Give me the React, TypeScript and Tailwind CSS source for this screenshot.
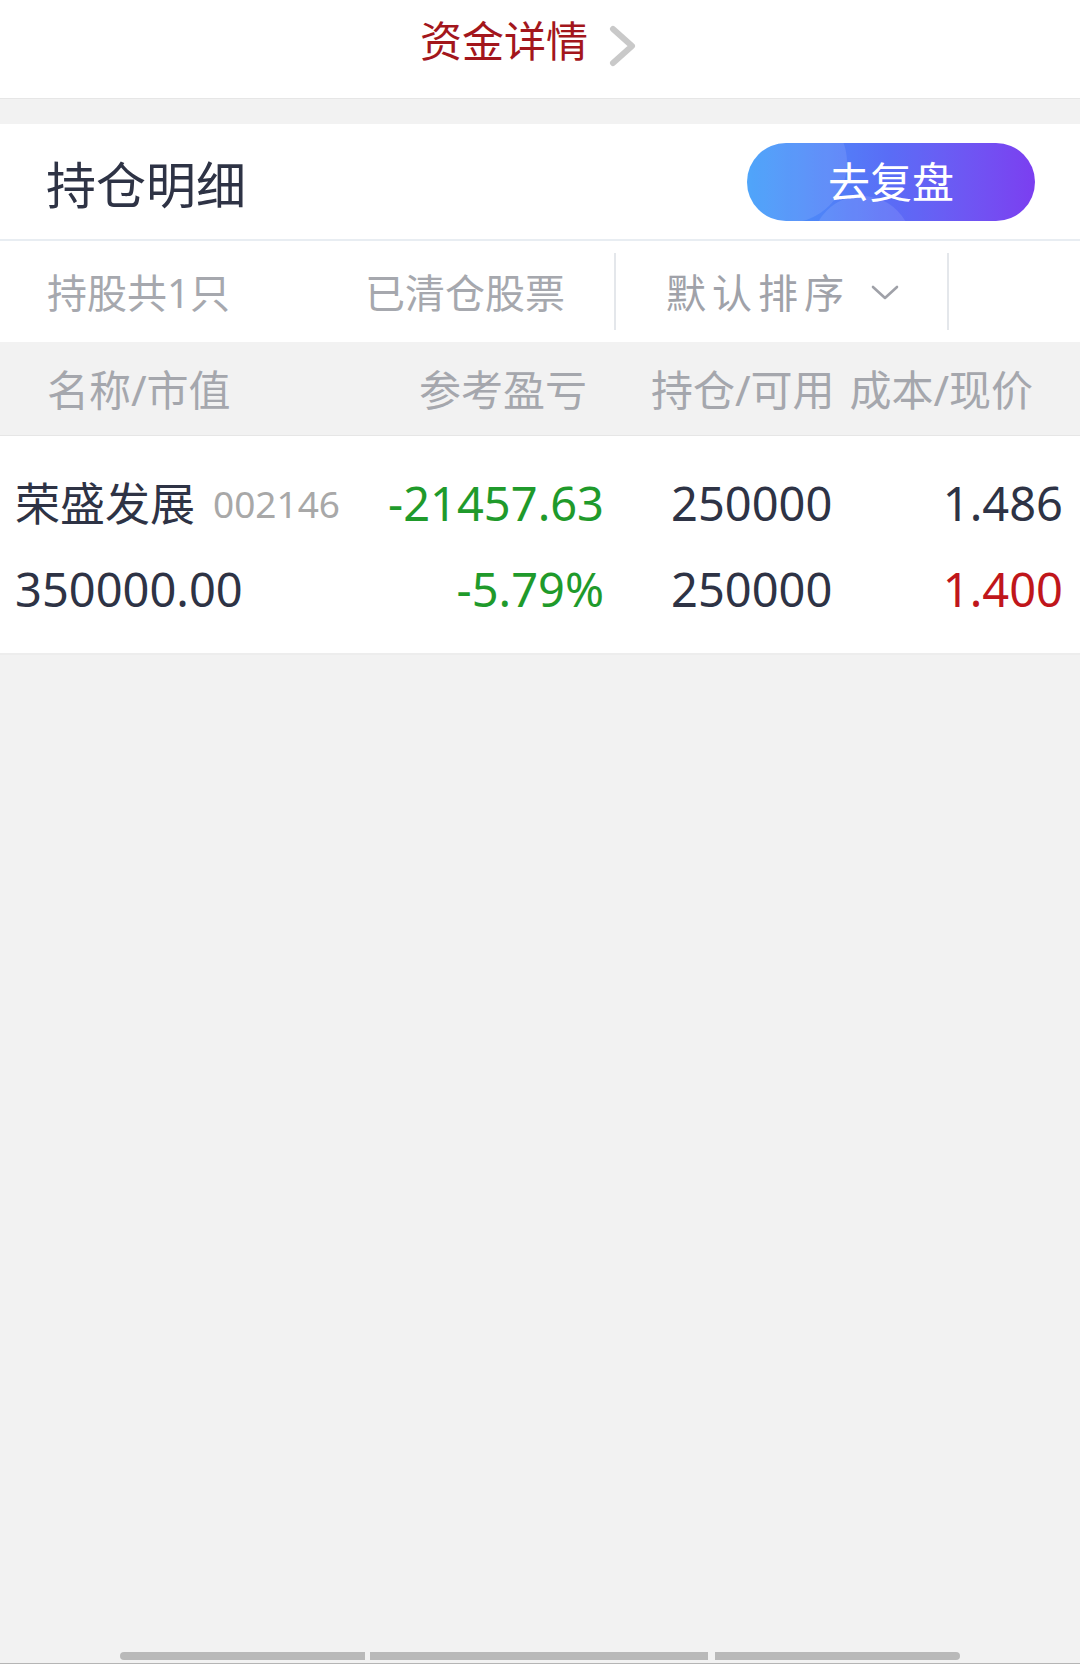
import React from 'react';

const font = "font-['Noto_Sans','Noto_Sans_CJK_SC',sans-serif]";

const ChevronRight = () => (
  <svg width="30" height="44" viewBox="0 0 30 44" className="ml-[20px] mt-[12px]">
    <path d="M5 4 L24 21 L5 38" fill="none" stroke="#c9c9c9" strokeWidth={6} strokeLinecap="round" strokeLinejoin="round" />
  </svg>
);

const ChevronDown = () => (
  <svg width="30" height="18" viewBox="0 0 30 18" className="ml-[20px]">
    <path d="M3 3 L15 14 L27 3" fill="none" stroke="#9fa1a8" strokeWidth={2.6} strokeLinecap="round" strokeLinejoin="round" />
  </svg>
);

export default function App() {
  return (
    <div className={`${font} w-[1080px] h-[1664px] bg-[#f2f2f2] flex flex-col overflow-hidden`}>
      {/* Top link bar */}
      <div className="h-[99px] bg-white flex justify-center items-start pt-[13px] pr-[22px] border-b border-[#e6e6e6]">
        <span className="text-[42px] leading-[56px] text-[#a3161c]">资金详情</span>
        <ChevronRight />
      </div>

      <div className="h-[25px]" />

      {/* Title bar */}
      <div className="h-[117px] bg-white flex items-center justify-between pl-[46px] pr-[45px] border-b-2 border-[#e8edf2]">
        <span className="text-[50px] leading-none text-[#2e3345] pt-[6px]">持仓明细</span>
        <button className="relative w-[288px] h-[78px] rounded-full overflow-hidden bg-gradient-to-r from-[#3b9bf9] via-[#5a6cf6] to-[#7b3ef0] flex items-center justify-center">
          <span className="absolute -left-[20px] -top-[40px] w-[120px] h-[120px] rounded-full bg-white/10" />
          <span className="absolute left-[65px] top-[53px] w-[100px] h-[100px] rounded-full bg-white/10" />
          <span className="relative text-[42px] leading-none text-white">去复盘</span>
        </button>
      </div>

      {/* Filter row */}
      <div className="h-[101px] bg-white flex items-center">
        <span className="w-[324px] pl-[47px] pt-[2px] text-[40px] leading-none text-[#a6a8ae]">持股共1只</span>
        <span className="w-[241px] pt-[2px] text-right text-[40px] leading-none text-[#a6a8ae]">已清仓股票</span>
        <div className="w-[2px] h-[77px] bg-[#e4e7eb] ml-[49px]" />
        <div className="w-[331px] flex items-center pl-[50px] pt-[2px]">
          <span className="text-[40px] leading-none tracking-[6px] text-[#a0a2a9]">默认排序</span>
          <ChevronDown />
        </div>
        <div className="w-[2px] h-[77px] bg-[#e4e7eb]" />
      </div>

      {/* Column header */}
      <div className="h-[94px] bg-[#f2f2f2] flex items-center pl-[47px] pr-[47px] pt-[2px] text-[42px] leading-none text-[#a5a7ad] border-b border-[#e6e6e6]">
        <span className="w-[300px]">名称/市值</span>
        <span className="w-[240px] text-right">参考盈亏</span>
        <span className="ml-[64px]">持仓/可用</span>
        <span className="flex-1 text-right">成本/现价</span>
      </div>

      {/* Holding row */}
      <div className="bg-white pt-[24px] pb-[21px] pl-[15px] pr-[17px] border-b-2 border-[#ededed] text-[47px] text-[#2e3345]">
        <div className="h-[86px] flex items-center">
          <div className="w-[340px] flex items-center">
            <span className="text-[45px] leading-none">荣盛发展</span>
            <span className="ml-[18px] text-[37px] leading-none text-[#a8a8a8]">002146</span>
          </div>
          <span className="w-[249px] text-right leading-none text-[#1f9a2b]">-21457.63</span>
          <span className="w-[260px] pl-[67px] leading-none">250000</span>
          <span className="flex-1 text-right leading-none">1.486</span>
        </div>
        <div className="h-[86px] flex items-center">
          <span className="w-[340px] leading-none">350000.00</span>
          <span className="w-[249px] text-right leading-none text-[#1f9a2b]">-5.79%</span>
          <span className="w-[260px] pl-[67px] leading-none">250000</span>
          <span className="flex-1 text-right leading-none text-[#c0161b]">1.400</span>
        </div>
      </div>

      <div className="flex-1" />

      {/* Bottom scroll indicator */}
      <div className="h-[11px] flex items-start pl-[120px]">
        <div className="w-[245px] h-[8px] bg-[#b9b9b9] rounded-l-full" />
        <div className="w-[338px] h-[8px] bg-[#b9b9b9] ml-[5px]" />
        <div className="w-[245px] h-[8px] bg-[#b9b9b9] ml-[7px] rounded-r-full" />
      </div>
      <div className="h-[1px] bg-[#b5b5b5]" />
    </div>
  );
}
